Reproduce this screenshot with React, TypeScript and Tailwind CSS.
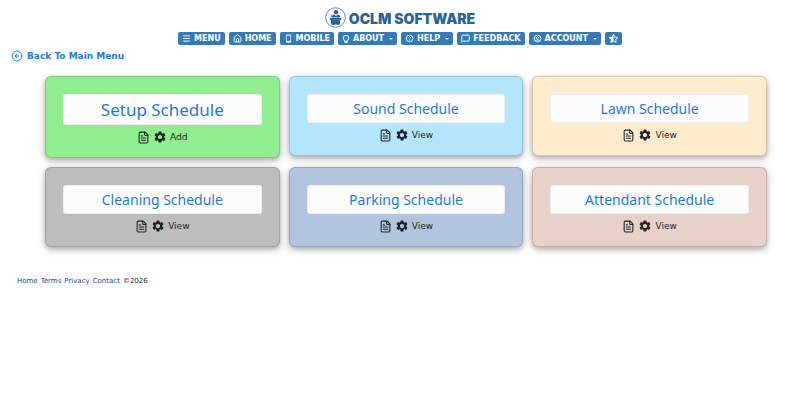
import type { ReactNode } from "react";
import clsx from "clsx";
import { CircleArrowLeft, FileText, House, Menu, MessageSquare } from "lucide-react";
import { BsLightbulb } from "react-icons/bs";
import { FaStarHalfAlt } from "react-icons/fa";
import { MdPhoneAndroid, MdSettings } from "react-icons/md";
import { TbHelp, TbUserCircle } from "react-icons/tb";

type NavItem = { icon: ReactNode; label?: string; menu?: boolean; name: string };

const navItems: NavItem[] = [
    { name: "Menu", label: "MENU", icon: <Menu size={9} strokeWidth={2.5} /> },
    { name: "Home", label: "HOME", icon: <House size={9} strokeWidth={2.5} /> },
    { name: "Mobile", label: "MOBILE", icon: <MdPhoneAndroid size={9} /> },
    { name: "About", label: "ABOUT", icon: <BsLightbulb size={8} strokeWidth={0.8} />, menu: true },
    { name: "Help", label: "HELP", icon: <TbHelp size={9} strokeWidth={2.2} />, menu: true },
    { name: "Feedback", label: "FEEDBACK", icon: <MessageSquare size={9} strokeWidth={2.5} /> },
    { name: "Account", label: "ACCOUNT", icon: <TbUserCircle size={9} strokeWidth={2.2} />, menu: true },
    { name: "Favorites", icon: <FaStarHalfAlt size={9} /> },
];

const schedules = [
    { title: "Setup Schedule", action: "Add", color: "bg-[#90ee90]", large: true },
    { title: "Sound Schedule", action: "View", color: "bg-[#b3e5fc]" },
    { title: "Lawn Schedule", action: "View", color: "bg-[#ffebcd]" },
    { title: "Cleaning Schedule", action: "View", color: "bg-[#bdbdbd]" },
    { title: "Parking Schedule", action: "View", color: "bg-[#b0c4de]" },
    { title: "Attendant Schedule", action: "View", color: "bg-[#e8d1c9]" },
];

const Logo = () => (
    <svg viewBox="0 0 44 44" className="size-[21px]" aria-hidden="true">
        <circle cx="22" cy="22" r="20.5" fill="#fff" stroke="#2a6496" strokeWidth="1.5" />
        <circle cx="23" cy="11" r="4.500" fill="#2a6496" />
        <path d="M14 22c0-4 3-6.500 6-6.500l3 4 3-4c4 0 6 2.500 6 6.500z" fill="#2a6496" />
        <path d="M10 23h24v4H10z" fill="#2a6496" />
        <path d="M12 27h20l-1 10H13z" fill="#2a6496" />
        <path d="M13 22v-5h3" fill="none" stroke="#2a6496" strokeWidth="1.500" />
    </svg>
);

const NavButton = ({ icon, label, menu, name }: NavItem) => (
    <button
        aria-label={name}
        className="flex h-[13px] items-center gap-[3px] rounded-xs bg-[#337ab7] px-1 text-[8px] font-bold text-white"
    >
        {icon}
        {label}
        {menu && <span className="ml-0.5 border-x-2 border-t-2 border-x-transparent border-t-white" />}
    </button>
);

export default function App() {
    return (
        <div className="bg-white pt-[7px] font-['DejaVu_Sans',sans-serif] text-[#212529]">
            <header className="flex flex-col items-center">
                <a href="#" className="flex items-end gap-[3px] text-[#2a6496]">
                    <Logo />
                    <span className="font-['Inter',sans-serif] text-[14px] leading-[19px] font-black">
                        OCLM SOFTWARE
                    </span>
                </a>
                <nav className="mt-1 flex flex-wrap gap-1">
                    {navItems.map((item) => (
                        <NavButton key={item.name} {...item} />
                    ))}
                </nav>
            </header>

            <a href="#" className="mt-[3px] ml-[11px] flex h-4 w-fit items-center gap-1 text-[9px] leading-4 font-bold text-[#1f7bdb]">
                <CircleArrowLeft size={12} />
                Back To Main Menu
            </a>

            <main className="mt-3 mr-[33px] ml-[45px] grid grid-cols-3 items-start gap-[9px]">
                {schedules.map(({ title, action, color, large }) => (
                    <section
                        key={title}
                        className={clsx(
                            "rounded-md border border-black/15 px-[17px] pt-[17px] pb-[13px] shadow-[0_2px_4px_rgba(0,0,0,0.2),0_3px_10px_rgba(0,0,0,0.19)]",
                            color,
                        )}
                    >
                        <a
                            href="#"
                            className={clsx(
                                "block rounded-[3px] border border-black/5 bg-[#fcfcfc] text-center font-['Noto_Sans',sans-serif] text-[#1f7bdb]",
                                large ? "text-[17px] leading-[29px]" : "text-[14px] leading-[27px]",
                            )}
                        >
                            {title}
                        </a>
                        <div className="mt-[5px] flex h-3.5 items-center justify-center gap-[3px] text-[9px] leading-3.5">
                            <FileText size={13} />
                            <MdSettings size={14} />
                            {action}
                        </div>
                    </section>
                ))}
            </main>

            <footer className="mt-7 flex gap-[3px] pl-[17px] text-[7px] leading-3">
                <a href="#" className="text-[#0d47b0]">Home</a>
                <a href="#" className="text-[#0d47b0]">Terms</a>
                <a href="#" className="text-[#0d47b0]">Privacy</a>
                <a href="#" className="text-[#0d47b0]">Contact</a>
                <span>©2026</span>
            </footer>
        </div>
    );
}
